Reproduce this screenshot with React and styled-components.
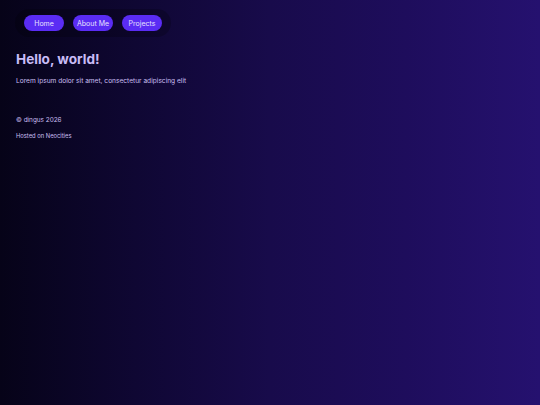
import React from 'react'
import styled, { createGlobalStyle } from 'styled-components'

const Global = createGlobalStyle`
  html, body {
    margin: 0;
    padding: 0;
    height: 100%;
  }
  body {
    background: linear-gradient(to right, #060318 0%, #0f0733 25%, #180b4b 50%, #1e0d5c 75%, #25116f 100%);
    font-family: Inter, "Noto Sans", sans-serif;
    color: #c8bcf4;
  }
  #root {
    min-height: 100%;
  }
`

const Page = styled.div`
  min-height: 405px;
  padding: 9px 16px;
  box-sizing: border-box;
`

const Nav = styled.nav`
  display: inline-flex;
  gap: 9px;
  padding: 6px 9px;
  margin-left: -1px;
  border-radius: 14px;
  background: rgba(0, 0, 0, 0.2);
`

const NavButton = styled.a`
  display: flex;
  align-items: center;
  justify-content: center;
  width: 40px;
  height: 16px;
  border-radius: 8px;
  background: #5a2cf4;
  color: #e6e0ff;
  font-size: 7px;
  text-decoration: none;
`

const Title = styled.h1`
  margin: 14px 0 0;
  font-size: 13.6px;
  font-weight: 700;
  color: #c9bcf6;
  line-height: 1.3;
`

const Text = styled.p`
  margin: 8px 0 0;
  font-size: 6.6px;
  color: #cabff2;
`

const Footer = styled.footer`
  margin-top: 31px;
  display: flex;
  flex-direction: column;
  gap: 8px;
`

const Copy = styled.div`
  font-size: 6.4px;
  color: #cabff2;
`

const Hosted = styled.div`
  font-size: 5.8px;
  color: #cabff2;
`

export default function App() {
  return (
    <Page>
      <Global />
      <Nav>
        <NavButton>Home</NavButton>
        <NavButton>About Me</NavButton>
        <NavButton>Projects</NavButton>
      </Nav>
      <Title>Hello, world!</Title>
      <Text>Lorem ipsum dolor sit amet, consectetur adipiscing elit</Text>
      <Footer>
        <Copy>© dingus 2026</Copy>
        <Hosted>Hosted on Neocities</Hosted>
      </Footer>
    </Page>
  )
}
